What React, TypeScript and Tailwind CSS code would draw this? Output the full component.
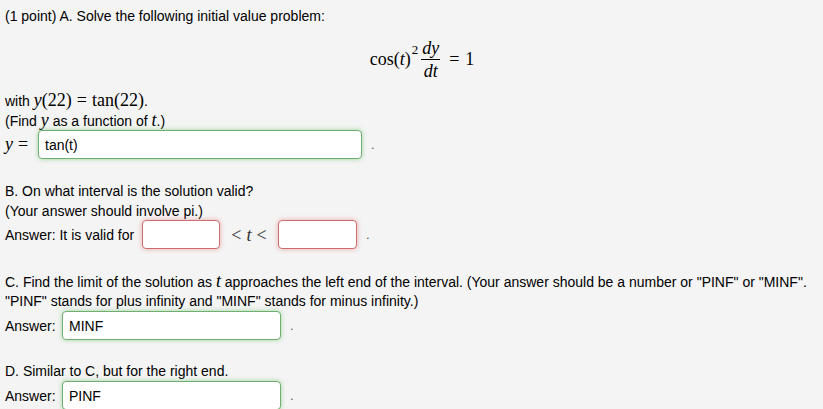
import React from 'react';

const sans = { fontFamily: '"Liberation Sans", Arial, sans-serif' };
const serif = { fontFamily: '"Liberation Serif", "Times New Roman", serif' };

function M({ children, i }: { children: React.ReactNode; i?: boolean }) {
  return (
    <span className={`text-[18px] leading-[20px] ${i ? 'italic' : ''}`} style={serif}>
      {children}
    </span>
  );
}

// equals / less-than with TeX-like spacing
function Rel({ c }: { c: string }) {
  return (
    <span className="text-[18px] leading-[20px] mx-[5px]" style={serif}>
      {c}
    </span>
  );
}

function Field({
  value,
  state,
  width,
}: {
  value?: string;
  state: 'ok' | 'bad';
  width: string;
}) {
  const tone =
    state === 'ok'
      ? 'border-[#6fae6f] shadow-[0_0_5px_rgba(92,184,92,0.55)]'
      : 'border-[#cf6e6e] shadow-[0_0_5px_rgba(217,83,79,0.45)]';
  return (
    <div
      className={`${width} h-[29px] flex items-center px-[6px] bg-white border rounded-[4px] text-[14px] text-black ${tone}`}
    >
      {value}
    </div>
  );
}

function Dot() {
  return <span className="text-[13px] text-[#555] ml-[9px]">.</span>;
}

export default function App() {
  return (
    <div
      className="w-[823px] h-[409px] overflow-hidden bg-[#f4f4f4] text-black text-[14px] leading-[20px] pl-[5px]"
      style={sans}
    >
      <div className="pt-[6px]">(1 point) A. Solve the following initial value problem:</div>

      {/* display equation */}
      <div className="h-[64px] flex items-center justify-center pl-[16px] pt-[2px]">
        <div className="flex items-center text-[18px]" style={serif}>
          <span>cos(</span>
          <span className="italic">t</span>
          <span>)</span>
          <span className="text-[13px] relative -top-[9px] ml-[1px]">2</span>
          <span className="inline-flex flex-col items-center mx-[3px] leading-[16px] italic">
            <span className="px-[1px] pb-[3px]">dy</span>
            <span className="border-t border-black w-full" />
            <span className="px-[1px] pt-[3px]">dt</span>
          </span>
          <span className="mx-[6px]">=</span>
          <span>1</span>
        </div>
      </div>

      <div className="h-[20px] whitespace-nowrap">
        with <M i>y</M>
        <M>(22)</M>
        <Rel c="=" />
        <M>tan(22)</M>.
      </div>
      <div className="h-[20px]">
        (Find <M i>y</M> as a function of <M i>t</M>.)
      </div>
      <div className="flex items-center h-[29px]">
        <span className="w-[33px] whitespace-nowrap">
          <M i>y</M>
          <Rel c="=" />
        </span>
        <Field value="tan(t)" state="ok" width="w-[324px]" />
        <Dot />
      </div>

      <div className="mt-[22px] h-[20px]">B. On what interval is the solution valid?</div>
      <div className="h-[19px]">(Your answer should involve pi.)</div>
      <div className="flex items-center h-[29px]">
        <span className="w-[137px] whitespace-nowrap">Answer: It is valid for</span>
        <Field state="bad" width="w-[78px]" />
        <span className="w-[58px] flex justify-center text-[#333]">
          <Rel c="<" />
          <M i>t</M>
          <Rel c="<" />
        </span>
        <Field state="bad" width="w-[79px]" />
        <Dot />
      </div>

      <div className="mt-[22px] h-[20px] whitespace-nowrap">
        C. Find the limit of the solution as <M i>t</M> approaches the left end of the interval. (Your answer should be a
        number or "PINF" or "MINF".
      </div>
      <div>"PINF" stands for plus infinity and "MINF" stands for minus infinity.)</div>
      <div className="flex items-center h-[29px]">
        <span className="w-[57px]">Answer:</span>
        <Field value="MINF" state="ok" width="w-[219px]" />
        <Dot />
      </div>

      <div className="mt-[21px]">D. Similar to C, but for the right end.</div>
      <div className="flex items-center h-[29px]">
        <span className="w-[57px]">Answer:</span>
        <Field value="PINF" state="ok" width="w-[219px]" />
        <Dot />
      </div>
    </div>
  );
}
